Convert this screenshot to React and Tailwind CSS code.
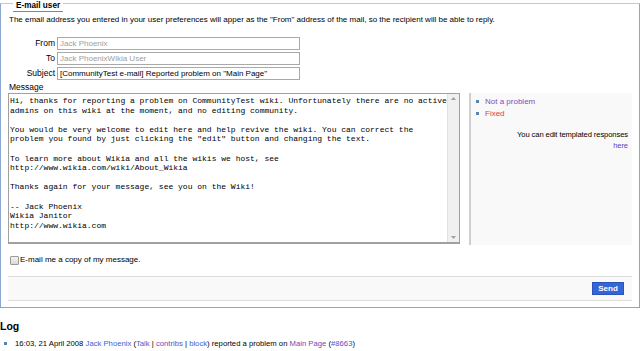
export default function App() {
  const msg = `Hi, thanks for reporting a problem on CommunityTest wiki. Unfortunately there are no active
admins on this wiki at the moment, and no editing community.

You would be very welcome to edit here and help revive the wiki. You can correct the
problem you found by just clicking the "edit" button and changing the text.

To learn more about Wikia and all the wikis we host, see
http://www.wikia.com/wiki/About_Wikia

Thanks again for your message, see you on the Wiki!

-- Jack Phoenix
Wikia Janitor
http://www.wikia.com`;

  return (
    <div className="w-[640px] h-[351px] overflow-hidden bg-white text-[8px] text-black" style={{ fontFamily: '"Liberation Sans", Arial, sans-serif' }}>
      <div className="mt-[3px] border border-[#8aa6d1] border-t-[#b9cbe6] pl-[7px] pr-[7px] pb-[6px]">
        <div className="-mt-[4px] ml-[5px] w-fit bg-white px-[3px] border-b border-[#2f9fe0] leading-[11px] text-[8.2px] font-bold">E-mail user</div>
        <p className="mt-[3px] ml-[1px] leading-[10px]">
          The email address you entered in your user preferences will apper as the "From" address of the mail, so the recipient will be able to reply.
        </p>

        <div className="mt-[12px] flex flex-col gap-[2px]">
          {[
            ['From', 'Jack Phoenix', true],
            ['To', 'Jack PhoenixWikia User', true],
            ['Subject', '[CommunityTest e-mail] Reported problem on "Main Page"', false],
          ].map(([label, val, muted]) => (
            <div key={label} className="flex items-center">
              <div className="w-[49px] text-right pr-[2px] text-[8.5px]">{label}</div>
              <div className={`w-[243px] h-[13px] border border-[#a9a9a9] px-[2px] leading-[11px] ${muted ? 'text-[#a0a0a0]' : 'text-black'}`}>{val}</div>
            </div>
          ))}
        </div>

        <div className="mt-[2px] ml-[1px] leading-[11px] text-[8.5px]">Message</div>
        <div className="flex items-start gap-[9px]">
          <div className="w-[452px] h-[151px] border border-[#a0a0a0] border-b-2 flex">
            <pre className="flex-1 pl-[1px] pt-[2px] text-[8px] leading-[9.6px] text-black" style={{ fontFamily: '"Liberation Mono", "Courier New", monospace' }}>{msg}</pre>
            <div className="w-[12px] bg-[#f0f0f0] border-l border-[#e2e2e2] flex flex-col justify-between items-center py-[3px]">
              <svg width="5" height="3" viewBox="0 0 5 3"><path d="M0 3L2.5 0L5 3Z" fill="#a0a0a0" /></svg>
              <svg width="5" height="3" viewBox="0 0 5 3"><path d="M0 0L2.5 3L5 0Z" fill="#a0a0a0" /></svg>
            </div>
          </div>
          <div className="w-[163px] h-[152px] bg-[#f9f9f9] border-l-2 border-[#cfcfcf] pl-[5px] pr-[4px] pt-[3px] text-[7.6px]">
            <ul className="leading-[11.5px] text-[8px]">
              <li className="flex items-center gap-[6px]"><span className="w-[3px] h-[3px] bg-[#5b83b0]" /><span className="text-[#7a4fc4]">Not a problem</span></li>
              <li className="flex items-center gap-[6px]"><span className="w-[3px] h-[3px] bg-[#5b83b0]" /><span className="text-[#d9443a]">Fixed</span></li>
            </ul>
            <div className="mt-[10px] text-right leading-[11px] tracking-[-0.1px]">
              <div>You can edit templated responses</div>
              <div className="text-[#5a3fc0]">here</div>
            </div>
          </div>
        </div>

        <div className="mt-[9px] ml-[2px] flex items-center">
          <span className="w-[9px] h-[9px] border border-[#9a9a9a] bg-gradient-to-b from-[#f4f4f4] to-[#d8d8d8] rounded-[1px]" />
          <span className="ml-[1px]">E-mail me a copy of my message.</span>
        </div>

        <div className="mt-[10px] h-[25px] bg-[#f9f9f9] border-y border-[#dcdcdc] flex items-center justify-end pr-[8px]">
          <button className="w-[32px] h-[13px] bg-[#3366d6] border border-[#2a54b8] text-white font-bold text-[8px] leading-[11px]">Send</button>
        </div>
      </div>

      <h2 className="mt-[12px] text-[10.5px] font-bold leading-[13px]">Log</h2>
      <div className="mt-[5px] flex items-center leading-[11px] text-[7.7px]">
        <span className="ml-[4px] w-[3px] h-[3px] bg-[#5b83b0]" />
        <span className="ml-[8px]">
          16:03, 21 April 2008 <span className="text-[#3a5fcd]">Jack Phoenix</span> (<span className="text-[#3a5fcd]">Talk</span> | <span className="text-[#6b4bb8]">contribs</span> | <span className="text-[#3a5fcd]">block</span>) reported a problem on <span className="text-[#6b4bb8]">Main Page</span> (<span className="text-[#6b4bb8]">#8663</span>)
        </span>
      </div>
    </div>
  );
}
